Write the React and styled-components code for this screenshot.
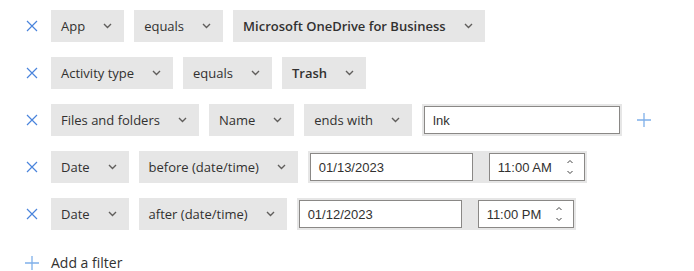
import React from "react";
import styled, { createGlobalStyle } from "styled-components";

const GlobalStyle = createGlobalStyle`
  body {
    margin: 0;
    background: #fff;
    font-family: "Open Sans", "Noto Sans", sans-serif;
    color: #323130;
  }
`;

const Panel = styled.div`
  display: flex;
  flex-direction: column;
  gap: 15px;
  padding: 10px 0 0 20px;
`;

const Row = styled.div`
  display: flex;
  align-items: center;
  height: 32px;
`;

const IconButton = styled.button`
  width: 24px;
  height: 32px;
  margin-right: 7px;
  padding: 0;
  border: 0;
  background: transparent;
  display: flex;
  align-items: center;
  justify-content: center;
  color: ${(p) => (p.$light ? "#7fb0ea" : "#4a84dc")};
`;

const Fields = styled.div`
  display: flex;
  align-items: center;
  gap: 10px;
`;

const Select = styled.div`
  height: 32px;
  display: flex;
  align-items: center;
  background: #e6e6e6;
  padding: 0 12px 0 10px;
  font-size: 13px;
  font-weight: ${(p) => (p.$strong ? 600 : 400)};
  color: #323130;
  white-space: nowrap;
`;

const Chevron = styled.svg`
  margin-left: 18px;
  color: #605e5c;
  flex: none;
`;

const InputWrap = styled.div`
  display: flex;
  align-items: center;
  gap: 16px;
  background: #e6e6e6;
  padding: 2px;
`;

const TextBox = styled.div`
  box-sizing: border-box;
  width: ${(p) => p.$w}px;
  height: 28px;
  border: 1px solid #8a8886;
  background: #fff;
  display: flex;
  align-items: center;
  padding: 0 8px;
  font-family: "Liberation Sans", Arial, sans-serif;
  font-size: 13px;
  color: #323130;
`;

const Value = styled.span`
  flex: 1;
`;

const Spinner = styled.svg`
  color: #444;
  margin-right: 2px;
`;

const AddRow = styled.div`
  display: flex;
  align-items: center;
  height: 20px;
  margin-top: 8px;
`;

const AddIcon = styled.span`
  width: 24px;
  margin-right: 7px;
  display: flex;
  justify-content: center;
  color: #7fb0ea;
`;

const AddLabel = styled.span`
  font-size: 14px;
  line-height: 14px;
  color: #323130;
`;

const ChevronDown = () => (
  <Chevron width="9" height="6" viewBox="0 0 9 6">
    <path d="M1 1 L4.5 4.5 L8 1" fill="none" stroke="currentColor" strokeWidth="1.4" />
  </Chevron>
);

const Cross = () => (
  <svg width="12" height="12" viewBox="0 0 12 12">
    <path d="M1 1 L11 11 M11 1 L1 11" stroke="currentColor" strokeWidth="1.2" />
  </svg>
);

const Plus = () => (
  <svg width="14" height="14" viewBox="0 0 14 14">
    <path d="M7 0 V14 M0 7 H14" stroke="currentColor" strokeWidth="1.3" />
  </svg>
);

const UpDown = () => (
  <Spinner width="8" height="18" viewBox="0 0 8 18">
    <path d="M1.5 5 L4 2.5 L6.5 5 M1.5 13 L4 15.5 L6.5 13" fill="none" stroke="currentColor" strokeWidth="1" />
  </Spinner>
);

const Drop = ({ children, strong }) => (
  <Select $strong={strong}>
    {children}
    <ChevronDown />
  </Select>
);

const DateTime = ({ date, time }) => (
  <InputWrap>
    <TextBox $w={163}>
      <Value>{date}</Value>
    </TextBox>
    <TextBox $w={96}>
      <Value>{time}</Value>
      <UpDown />
    </TextBox>
  </InputWrap>
);

const FILTERS = [
  { parts: ["App", "equals"], value: "Microsoft OneDrive for Business" },
  { parts: ["Activity type", "equals"], value: "Trash" },
  { parts: ["Files and folders", "Name", "ends with"], text: "lnk" },
  { parts: ["Date", "before (date/time)"], date: "01/13/2023", time: "11:00 AM" },
  { parts: ["Date", "after (date/time)"], date: "01/12/2023", time: "11:00 PM" },
];

export default function App() {
  return (
    <>
      <GlobalStyle />
      <Panel>
        {FILTERS.map((f, i) => (
          <Row key={i}>
            <IconButton aria-label="Remove filter">
              <Cross />
            </IconButton>
            <Fields>
              {f.parts.map((p) => (
                <Drop key={p}>{p}</Drop>
              ))}
              {f.value && <Drop strong>{f.value}</Drop>}
              {f.text && (
                <InputWrap>
                  <TextBox $w={196}>
                    <Value>{f.text}</Value>
                  </TextBox>
                </InputWrap>
              )}
              {f.date && <DateTime date={f.date} time={f.time} />}
              {f.text && (
                <IconButton $light aria-label="Add value">
                  <Plus />
                </IconButton>
              )}
            </Fields>
          </Row>
        ))}
        <AddRow>
          <AddIcon>
            <Plus />
          </AddIcon>
          <AddLabel>Add a filter</AddLabel>
        </AddRow>
      </Panel>
    </>
  );
}
